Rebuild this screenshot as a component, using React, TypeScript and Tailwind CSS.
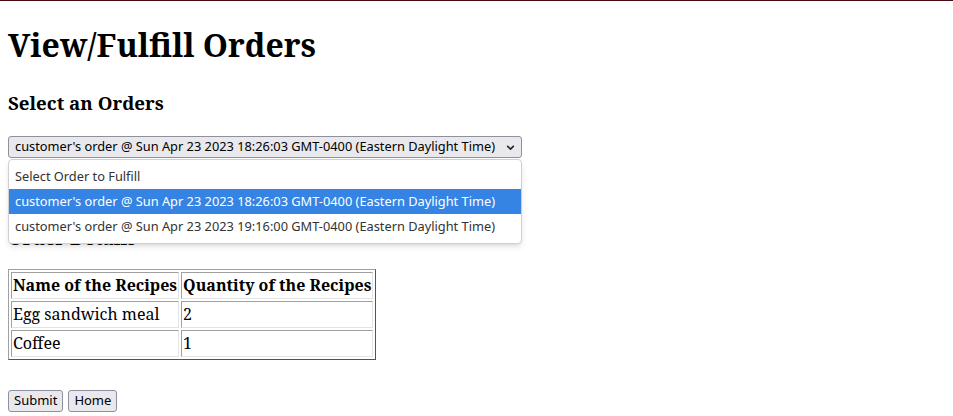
import React from "react";

const orders = [
  "customer's order @ Sun Apr 23 2023 18:26:03 GMT-0400 (Eastern Daylight Time)",
  "customer's order @ Sun Apr 23 2023 19:16:00 GMT-0400 (Eastern Daylight Time)",
];

const recipes = [
  { name: "Egg sandwich meal", qty: 2 },
  { name: "Coffee", qty: 1 },
];

const cell =
  "border border-t-[#a0a0a0] border-l-[#a0a0a0] border-r-[#e4e4e4] border-b-[#e4e4e4] px-px py-px text-left leading-[23px]";

export default function App() {
  return (
    <div className="min-h-screen bg-white pt-px text-black font-['Noto_Serif','DejaVu_Serif',serif]">
      <div className="absolute left-0 right-0 top-0 h-px bg-[#4c0b12]" />
      <div className="px-2">
        <h1 className="mt-[22px] text-[32px] leading-[43px] font-bold">View/Fulfill Orders</h1>
        <h3 className="mt-6 text-[18.72px] leading-[25px] font-bold">Select an Orders</h3>

        {/* select, shown open */}
        <div className="relative mt-[21px] w-[514px]">
          <div className="flex h-[22px] items-center rounded-[3px] border border-[#8f8f9d] bg-[#e9e9ed] pl-[6px] pr-[5px] font-['Noto_Sans',sans-serif] text-[12.8px]">
            <span className="flex-1">{orders[0]}</span>
            <svg width="11" height="11" viewBox="0 0 10 10" fill="none">
              <path d="M2 3.5 L5 6.5 L8 3.5" stroke="#222" strokeWidth="1.4" />
            </svg>
          </div>

          <div className="absolute left-0 top-[23px] z-10 w-[514px] rounded-[4px] border border-[#d0d0d0] bg-white py-[4px] font-['Noto_Sans',sans-serif] text-[12.8px] shadow-md">
            <div className="h-[25px] px-[6px] leading-[25px] text-[#333]">Select Order to Fulfill</div>
            <div className="h-[25px] bg-[#3584e4] px-[6px] leading-[25px] text-white">{orders[0]}</div>
            <div className="h-[25px] px-[6px] leading-[25px] text-[#333]">{orders[1]}</div>
          </div>
        </div>

        <h3 className="mt-[67px] text-[18.72px] leading-[25px] font-bold">Order Details</h3>

        <table className="mt-[19px] border-separate border-spacing-[2px] border border-t-[#a0a0a0] border-l-[#a0a0a0] border-r-[#555] border-b-[#555] text-base">
          <thead>
            <tr>
              <th className={cell + " font-bold"}>Name of the Recipes</th>
              <th className={cell + " font-bold"}>Quantity of the Recipes</th>
            </tr>
          </thead>
          <tbody>
            {recipes.map((r) => (
              <tr key={r.name}>
                <td className={cell}>{r.name}</td>
                <td className={cell}>{r.qty}</td>
              </tr>
            ))}
          </tbody>
        </table>

        <div className="mt-[30px] flex gap-[5px] font-['Noto_Sans',sans-serif] text-[13px]">
          <button className="h-[22px] rounded-[3px] border border-[#8f8f9d] bg-[#e9e9ed] px-[5px]">Submit</button>
          <button className="h-[22px] rounded-[3px] border border-[#8f8f9d] bg-[#e9e9ed] px-[5px]">Home</button>
        </div>
      </div>
    </div>
  );
}
